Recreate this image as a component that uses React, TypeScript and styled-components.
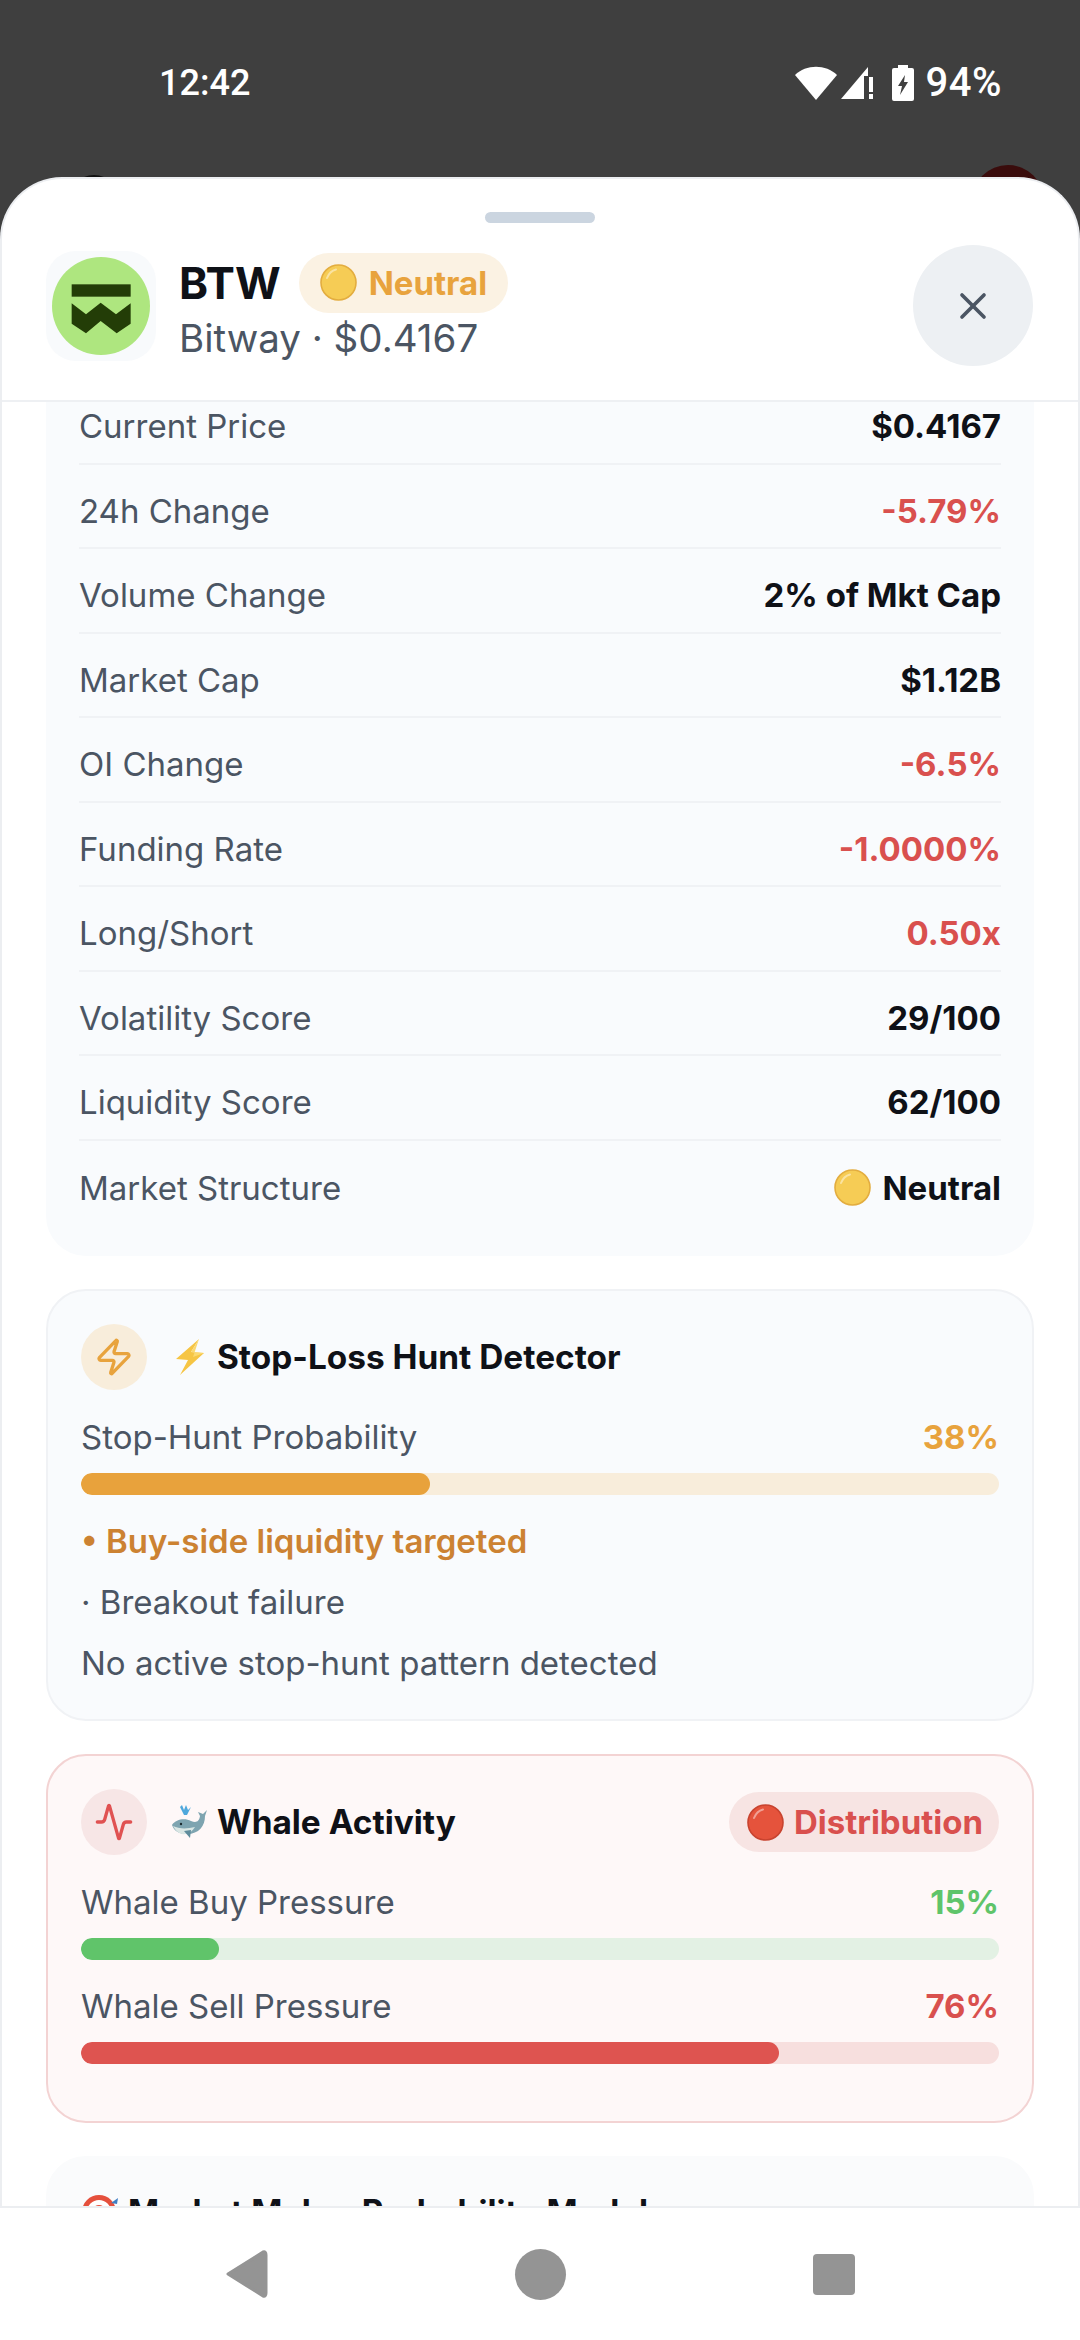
import styled, { createGlobalStyle } from "styled-components";
import { Activity, X, Zap } from "lucide-react";

const GlobalStyle = createGlobalStyle`
  html, body {
    margin: 0;
    padding: 0;
    background: #3f3f3f;
  }

  * {
    box-sizing: border-box;
  }
`;

const Screen = styled.div`
  position: relative;
  display: flex;
  flex-direction: column;
  width: 1080px;
  height: 2340px;
  overflow: hidden;
  background: #3f3f3f;
  font-family: Inter, "Liberation Sans", sans-serif;
`;

const StatusBar = styled.div`
  display: flex;
  flex: 0 0 177px;
  justify-content: space-between;
  align-items: flex-start;
  padding: 60px 78px 0 159px;
  color: #fff;
  font-family: Roboto, sans-serif;
  font-size: 36px;
  font-weight: 500;
  line-height: 46px;
`;

const StatusIcons = styled.div`
  display: flex;
  align-items: center;
  gap: 11px;
`;

const Battery = styled.span`
  font-size: 40px;
  letter-spacing: 0.5px;
`;

const BehindDot = styled.div<{ $left: number; $top: number; $size: number; $color: string }>`
  position: absolute;
  left: ${(p) => p.$left}px;
  top: ${(p) => p.$top}px;
  width: ${(p) => p.$size}px;
  height: ${(p) => p.$size}px;
  border-radius: 50%;
  background: ${(p) => p.$color};
`;

const Sheet = styled.div`
  position: relative;
  display: flex;
  flex: 1;
  flex-direction: column;
  min-height: 0;
  background: #fff;
  border: 2px solid #eceef1;
  border-bottom: 0;
  border-radius: 62px 62px 0 0;
`;

const Grabber = styled.div`
  flex: none;
  width: 110px;
  height: 11px;
  margin: 33px auto 0;
  border-radius: 6px;
  background: #cbd5e0;
`;

const Header = styled.div`
  display: flex;
  flex: none;
  align-items: center;
  padding: 22px 45px 34px 44px;
  border-bottom: 2px solid #eef0f3;
`;

const LogoTile = styled.div`
  display: flex;
  flex: none;
  align-items: center;
  justify-content: center;
  width: 110px;
  height: 110px;
  border-radius: 30px;
  background: #f8fafc;
`;

const TitleBlock = styled.div`
  display: flex;
  flex: 1;
  flex-direction: column;
  margin: 3px 0 0 23px;
`;

const TitleRow = styled.div`
  display: flex;
  align-items: center;
  gap: 18px;
`;

const Symbol = styled.span`
  color: #0f1117;
  font-size: 44px;
  font-weight: 700;
  line-height: 60px;
`;

const Pill = styled.span<{ $bg: string; $color: string; $compact?: boolean }>`
  display: inline-flex;
  align-items: center;
  gap: ${(p) => (p.$compact ? 10 : 12)}px;
  height: 60px;
  padding: ${(p) => (p.$compact ? "0 16px 0 18px" : "0 21px")};
  border-radius: 30px;
  background: ${(p) => p.$bg};
  color: ${(p) => p.$color};
  font-size: 33px;
  font-weight: 700;
`;

const Subtitle = styled.div`
  margin-top: 1px;
  color: #4b5563;
  font-size: 38.5px;
  line-height: 48px;
`;

const CloseButton = styled.div`
  display: flex;
  flex: none;
  align-items: center;
  justify-content: center;
  width: 120px;
  height: 121px;
  border-radius: 50%;
  background: #edf0f3;
  color: #4b5563;
`;

const Body = styled.div`
  display: flex;
  flex: 1;
  flex-direction: column;
  gap: 33px;
  min-height: 0;
  overflow: hidden;
  padding: 0 44px;
`;

const StatsCard = styled.div`
  flex: none;
  margin-top: -40px;
  padding: 18px 33px 31px;
  border-radius: 40px;
  background: #f9fbfd;
`;

const StatRow = styled.div`
  display: flex;
  justify-content: space-between;
  align-items: center;
  height: 84.5px;
  padding-top: 10px;
  border-bottom: 2px solid #f0f2f5;

  &:last-child {
    border-bottom: 0;
  }
`;

const Label = styled.span`
  color: #4b5563;
  font-size: 33px;
`;

const Value = styled.span<{ $color?: string }>`
  display: inline-flex;
  align-items: center;
  gap: 11px;
  color: ${(p) => p.$color || "#0f1117"};
  font-size: 33px;
  font-weight: 700;
`;

const Card = styled.div<{ $bg?: string; $border?: string }>`
  flex: none;
  padding: 33px;
  border: 2px solid ${(p) => p.$border || "#f0f2f5"};
  border-radius: 40px;
  background: ${(p) => p.$bg || "#f9fbfd"};
`;

const CardHead = styled.div`
  display: flex;
  align-items: center;
  margin-bottom: 25px;
`;

const IconCircle = styled.div<{ $bg: string; $color: string }>`
  display: flex;
  flex: none;
  align-items: center;
  justify-content: center;
  width: 66px;
  height: 66px;
  margin-right: 24px;
  border-radius: 50%;
  background: ${(p) => p.$bg};
  color: ${(p) => p.$color};
`;

const CardTitle = styled.div`
  display: flex;
  flex: 1;
  align-items: center;
  gap: 9px;
  color: #0f1117;
  font-size: 33.4px;
  font-weight: 700;
  line-height: 42px;
  white-space: nowrap;
`;

const MeterHead = styled.div`
  display: flex;
  justify-content: space-between;
  align-items: center;
  height: 44px;
  margin-bottom: 14px;
`;

const Track = styled.div<{ $bg: string }>`
  height: 22px;
  margin-bottom: 24px;
  border-radius: 11px;
  overflow: hidden;
  background: ${(p) => p.$bg};
`;

const Fill = styled.div<{ $color: string }>`
  height: 100%;
  border-radius: 11px;
  background: ${(p) => p.$color};
`;

const Note = styled.div<{ $color?: string; $bold?: boolean }>`
  margin-top: 16px;
  color: ${(p) => p.$color || "#4b5563"};
  font-size: 33px;
  font-weight: ${(p) => (p.$bold ? 600 : 400)};
  line-height: 45px;
`;

const NavBar = styled.div`
  position: relative;
  display: flex;
  flex: 0 0 134px;
  justify-content: center;
  align-items: center;
  margin: 0 -2px;
  border-top: 2px solid #eceef1;
  background: #fff;
`;

const NavCell = styled.div`
  display: flex;
  justify-content: center;
  width: 294px;
`;

const NavCircle = styled.div`
  width: 51px;
  height: 51px;
  border-radius: 50%;
  background: #949494;
`;

const NavSquare = styled.div`
  width: 42px;
  height: 41px;
  border-radius: 4px;
  background: #949494;
`;

const RED = "#d9504e";

const STATS = [
  { label: "Current Price", value: "$0.4167" },
  { label: "24h Change", value: "-5.79%", color: RED },
  { label: "Volume Change", value: "2% of Mkt Cap" },
  { label: "Market Cap", value: "$1.12B" },
  { label: "OI Change", value: "-6.5%", color: RED },
  { label: "Funding Rate", value: "-1.0000%", color: RED },
  { label: "Long/Short", value: "0.50x", color: RED },
  { label: "Volatility Score", value: "29/100" },
  { label: "Liquidity Score", value: "62/100" },
];

function Ball({ fill, rim }: { fill: string; rim: string }) {
  return (
    <svg width="37" height="37" viewBox="0 0 37 37">
      <circle cx="18.5" cy="18.5" r="17.5" fill={fill} stroke={rim} strokeWidth="1.6" />
      <path d="M7 14 C9 9 12 6.5 16 5.5" fill="none" stroke="#fff" strokeOpacity="0.45" strokeWidth="2" strokeLinecap="round" />
    </svg>
  );
}

function Logo() {
  return (
    <svg width="98" height="98" viewBox="0 0 294 294">
      <circle cx="147" cy="147" r="147" fill="#aee67f" />
      <rect x="59" y="82" width="177" height="37" fill="#233d07" />
      <path d="M59 139 L102 172 L146 137 L192 172 L236 139 L236 200 L194 229 L146 192 L102 229 L59 200 Z" fill="#233d07" strokeLinejoin="round" />
    </svg>
  );
}

function BoltEmoji() {
  return (
    <svg width="37" height="38" viewBox="-4 0 37 38">
      <path d="M24 1 L1 21 L13 22 L5 37 L29 15 L16 14 Z" fill="#f6c544" />
      <path d="M24 1 L16 14 L29 15 L18 19 Z" fill="#fbd971" />
    </svg>
  );
}

function WhaleEmoji() {
  return (
    <svg width="37" height="37" viewBox="0 0 37 37">
      <path d="M1 21 C5 15 14 14 20 17 C25 19 28 18 29 12 L27 8 L32 10 L36 6 L34 12 C34 22 28 30 16 30 C8 30 3 27 1 21 Z" fill="#7ea4b0" />
      <path d="M2 22 C8 25 16 25 24 23 C21 28 16 31 11 30 C7 29 4 26 2 22 Z" fill="#d9e6e4" />
      <path d="M13 27 L20 26 L19 34 Z" fill="#5f8c9c" />
      <circle cx="10" cy="20" r="1.2" fill="#1c2a30" />
      <path d="M11 1 L13 6 L15 1 L17 6 L20 3 L16 11 L13 11 L9 3 Z" fill="#4fa8dc" />
    </svg>
  );
}

function TargetEmoji() {
  return (
    <svg width="38" height="38" viewBox="0 0 38 38">
      <circle cx="18" cy="19" r="17" fill="#e5503c" />
      <circle cx="18" cy="19" r="12" fill="#fff" />
      <circle cx="18" cy="19" r="7" fill="#e5503c" />
      <circle cx="18" cy="19" r="3" fill="#fff" />
      <path d="M30 10 L37 5 L36 11 Z" fill="#3f7fc4" />
    </svg>
  );
}

function StatusGlyphs() {
  return (
    <>
      <svg width="44" height="34" viewBox="0 0 44 34">
        <path d="M1 9 C12 -2 32 -2 43 9 L22 34 Z" fill="#fff" />
      </svg>
      <svg width="36" height="34" viewBox="0 0 36 34" style={{ marginLeft: -8 }}>
        <path d="M0 33 L27 1 L27 10 L23 10 L23 33 Z" fill="#fff" />
        <rect x="28" y="11" width="4" height="15" fill="#fff" />
        <rect x="28" y="28" width="4" height="5" fill="#fff" />
      </svg>
      <svg width="24" height="36" viewBox="0 0 24 36" style={{ marginLeft: 3 }}>
        <path d="M7 0 H17 V3 H21 Q23 3 23 5 V34 Q23 36 21 36 H3 Q1 36 1 34 V5 Q1 3 3 3 H7 Z" fill="#fff" />
        <path d="M14 10 L7 21 H11 L9 30 L17 17 H13 Z" fill="#3f3f3f" />
      </svg>
    </>
  );
}

export default function App() {
  return (
    <Screen>
      <GlobalStyle />
      <StatusBar>
        <span>12:42</span>
        <StatusIcons>
          <StatusGlyphs />
          <Battery>94%</Battery>
        </StatusIcons>
      </StatusBar>
      <BehindDot $left={972} $top={165} $size={72} $color="#3a0c0c" />
      <BehindDot $left={68} $top={175} $size={52} $color="#111" />

      <Sheet>
        <Grabber />
        <Header>
          <LogoTile>
            <Logo />
          </LogoTile>
          <TitleBlock>
            <TitleRow>
              <Symbol>BTW</Symbol>
              <Pill $bg="#fbf2e3" $color="#e8a33d">
                <Ball fill="#f6cc55" rim="#e3ad3f" />
                Neutral
              </Pill>
            </TitleRow>
            <Subtitle>Bitway · $0.4167</Subtitle>
          </TitleBlock>
          <CloseButton>
            <X size={44} strokeWidth={2} />
          </CloseButton>
        </Header>

        <Body>
          <StatsCard>
            {STATS.map((s) => (
              <StatRow key={s.label}>
                <Label>{s.label}</Label>
                <Value $color={s.color}>{s.value}</Value>
              </StatRow>
            ))}
            <StatRow>
              <Label>Market Structure</Label>
              <Value>
                <Ball fill="#f6cc55" rim="#e3ad3f" />
                Neutral
              </Value>
            </StatRow>
          </StatsCard>

          <Card>
            <CardHead>
              <IconCircle $bg="#f8eddb" $color="#e8a33d">
                <Zap size={40} strokeWidth={2} />
              </IconCircle>
              <CardTitle>
                <BoltEmoji />
                Stop-Loss Hunt Detector
              </CardTitle>
            </CardHead>
            <MeterHead>
              <Label>Stop-Hunt Probability</Label>
              <Value $color="#e8a33d">38%</Value>
            </MeterHead>
            <Track $bg="#f8eddb">
              <Fill $color="#e8a23c" style={{ width: "38%" }} />
            </Track>
            <Note $color="#cc8232" $bold>• Buy-side liquidity targeted</Note>
            <Note>· Breakout failure</Note>
            <Note>No active stop-hunt pattern detected</Note>
          </Card>

          <Card $bg="#fef8f8" $border="#f3d3d3">
            <CardHead>
              <IconCircle $bg="#f7e6e6" $color="#e05252">
                <Activity size={40} strokeWidth={2} />
              </IconCircle>
              <CardTitle>
                <WhaleEmoji />
                Whale Activity
              </CardTitle>
              <Pill $bg="#f7e4e3" $color={RED} $compact>
                <Ball fill="#e5533c" rim="#c8432f" />
                Distribution
              </Pill>
            </CardHead>
            <MeterHead>
              <Label>Whale Buy Pressure</Label>
              <Value $color="#5fc46a">15%</Value>
            </MeterHead>
            <Track $bg="#e3f1e4">
              <Fill $color="#60c46a" style={{ width: "15%" }} />
            </Track>
            <MeterHead>
              <Label>Whale Sell Pressure</Label>
              <Value $color={RED}>76%</Value>
            </MeterHead>
            <Track $bg="#f7dfde">
              <Fill $color="#de5450" style={{ width: "76%" }} />
            </Track>
          </Card>

          <Card $bg="#fafbfc" $border="#fafbfc">
            <CardTitle>
              <TargetEmoji />
              Market Maker Probability Model
            </CardTitle>
          </Card>
        </Body>

        <NavBar>
          <NavCell>
            <svg width="44" height="50" viewBox="0 0 44 50">
              <path d="M39 3 L4 25 L39 47 Q42 48 42 44 L42 6 Q42 2 39 3 Z" fill="#949494" stroke="#949494" strokeWidth="3" strokeLinejoin="round" />
            </svg>
          </NavCell>
          <NavCell>
            <NavCircle />
          </NavCell>
          <NavCell>
            <NavSquare />
          </NavCell>
        </NavBar>
      </Sheet>
    </Screen>
  );
}
